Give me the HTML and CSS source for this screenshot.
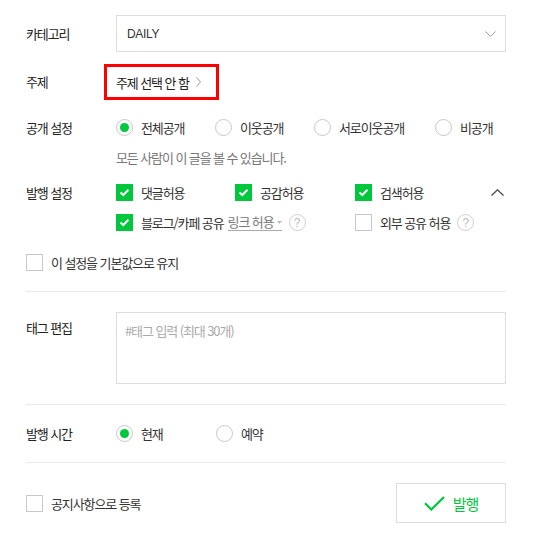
FILE: index.html
```html
<!DOCTYPE html>
<html lang="ko">
<head>
<meta charset="utf-8">
<link rel="stylesheet" href="styles.css">
</head>
<body>
<div class="panel">
  <div class="row row-cat">
    <div class="label">카테고리</div>
    <div class="select">
      <span class="select-text">DAILY</span>
      <svg class="chev-down" width="11" height="6" viewBox="0 0 11 6"><path d="M0.5 0.5 L5.5 5.5 L10.5 0.5" fill="none" stroke="#9a9a9a" stroke-width="1"/></svg>
    </div>
  </div>

  <div class="row row-subject">
    <div class="label">주제</div>
    <a class="subject">
      <span>주제 선택 안 함</span>
      <svg class="chev-right" width="5" height="10" viewBox="0 0 5 10"><path d="M0.5 0.5 L4.5 5 L0.5 9.5" fill="none" stroke="#999" stroke-width="1"/></svg>
    </a>
  </div>

  <div class="row row-open">
    <div class="label label-17">공개 설정</div>
    <div class="content">
      <div class="line">
        <div class="radio on w99"><i></i><span>전체공개</span></div>
        <div class="radio w99"><i></i><span>이웃공개</span></div>
        <div class="radio w121"><i></i><span>서로이웃공개</span></div>
        <div class="radio"><i></i><span>비공개</span></div>
      </div>
      <p class="help">모든 사람이 이 글을 볼 수 있습니다.</p>
    </div>
  </div>

  <div class="row row-publish">
    <div class="label label-17">발행 설정</div>
    <div class="content">
      <div class="line">
        <div class="check w119"><i class="cb on"><svg width="15" height="15" viewBox="0 0 15 15"><path d="M3.5 7.5 L6.3 10 L11.5 4.8" fill="none" stroke="#fff" stroke-width="2"/></svg></i><span>댓글허용</span></div>
        <div class="check w120"><i class="cb on"><svg width="15" height="15" viewBox="0 0 15 15"><path d="M3.5 7.5 L6.3 10 L11.5 4.8" fill="none" stroke="#fff" stroke-width="2"/></svg></i><span>공감허용</span></div>
        <div class="check"><i class="cb on"><svg width="15" height="15" viewBox="0 0 15 15"><path d="M3.5 7.5 L6.3 10 L11.5 4.8" fill="none" stroke="#fff" stroke-width="2"/></svg></i><span>검색허용</span></div>
        <svg class="chev-up" width="13" height="7" viewBox="0 0 13 7"><path d="M0.5 6.5 L6.5 0.8 L12.5 6.5" fill="none" stroke="#444" stroke-width="1.2"/></svg>
      </div>
      <div class="line line2">
        <div class="check w239"><i class="cb on"><svg width="15" height="15" viewBox="0 0 15 15"><path d="M3.5 7.5 L6.3 10 L11.5 4.8" fill="none" stroke="#fff" stroke-width="2"/></svg></i><span>블로그/카페 공유</span>
          <span class="link">링크 허용<svg class="tri" width="5" height="3" viewBox="0 0 5 3"><path d="M0 0 H5 L2.5 3 Z" fill="#bbb"/></svg></span>
          <span class="q">?</span>
        </div>
        <div class="check"><i class="cb"></i><span>외부 공유 허용</span><span class="q">?</span></div>
      </div>
    </div>
  </div>

  <div class="row row-keep">
    <div class="check"><i class="cb"></i><span>이 설정을 기본값으로 유지</span></div>
  </div>

  <div class="hr hr1"></div>

  <div class="row row-tag">
    <div class="label label-tag">태그 편집</div>
    <div class="tagbox">#태그 입력 (최대 30개)</div>
  </div>

  <div class="hr hr2"></div>

  <div class="row row-time">
    <div class="label label-17">발행 시간</div>
    <div class="line">
      <div class="radio on w100"><i></i><span>현재</span></div>
      <div class="radio"><i></i><span>예약</span></div>
    </div>
  </div>

  <div class="hr hr3"></div>

  <div class="row row-bottom">
    <div class="check"><i class="cb"></i><span>공지사항으로 등록</span></div>
    <button class="btn">
      <svg width="21" height="15" viewBox="0 0 21 15"><path d="M1 7.2 L7.3 13.5 L20 1" fill="none" stroke="#00c73c" stroke-width="2.2"/></svg>
      <span>발행</span>
    </button>
  </div>
</div>
</body>
</html>
```
FILE: styles.css
```css
* { box-sizing: border-box; margin: 0; padding: 0; }
body {
  font-family: "Noto Sans CJK KR", "Noto Sans", sans-serif;
  font-size: 13px;
  color: #333;
  background: #fff;
  letter-spacing: -1.1px;
}
.panel { width: 536px; padding: 15px 30px 0 26px; }
.row { display: flex; }
.label { width: 90px; flex: none; line-height: 18px; color: #222; }
.label-17 { line-height: 17px; }
.content { flex: 1; }
.line { display: flex; align-items: center; height: 17px; }

.row-cat { height: 37px; align-items: center; }
.select {
  flex: 1; height: 37px; border: 1px solid #ddd;
  display: flex; align-items: center; justify-content: space-between;
  padding: 0 9px 0 10px;
}
.select-text { font-family: "Liberation Sans", Arial, sans-serif; font-size: 12px; letter-spacing: -0.3px; color: #333; }

.row-subject { margin-top: 12px; height: 36px; align-items: center; }
.subject {
  margin-left: -12px; width: 115px; height: 36px;
  border: 3px solid #f00; display: flex; align-items: center;
  padding: 0 15px 0 9px; color: #222; white-space: nowrap;
}
.chev-right { margin-left: auto; flex: none; }

.row-open { margin-top: 19px; }
.radio { display: flex; align-items: center; height: 17px; white-space: nowrap; }
.radio i {
  width: 17px; height: 17px; border: 1px solid #c8c8c8; border-radius: 50%;
  margin-right: 8px; position: relative; flex: none;
}
.radio.on i::after {
  content: ""; position: absolute; left: 3px; top: 3px;
  width: 9px; height: 9px; border-radius: 50%; background: #00c73c;
}
.w99 { width: 99px; }
.w100 { width: 100px; }
.w121 { width: 121px; }
.w119 { width: 119px; }
.w120 { width: 120px; }
.w239 { width: 239px; }
.help { margin-top: 13px; line-height: 18px; color: #777; }

.row-publish { margin-top: 17px; }
.line2 { margin-top: 13px; }
.check { display: flex; align-items: center; height: 17px; white-space: nowrap; }
.cb {
  width: 17px; height: 17px; border: 1px solid #c8c8c8; background: #fff;
  margin-right: 8px; flex: none; display: flex; align-items: center; justify-content: center;
}
.cb.on { background: #00c73c; border-color: #00c73c; }
.chev-up { margin-left: auto; margin-right: 2px; }
.link {
  margin-left: 4px; color: #777; line-height: 16px;
  border-bottom: 1px solid #aaa; display: inline-flex; align-items: center;
}
.tri { margin-left: 3px; }
.q {
  margin-left: 7px; width: 17px; height: 17px; border: 1px solid #d0d0d0; border-radius: 50%;
  color: #bbb; font-family: "Liberation Sans", Arial, sans-serif; font-size: 12px; letter-spacing: 0;
  display: inline-flex; align-items: center; justify-content: center; flex: none;
}

.row-keep { margin-top: 23px; }

.hr { height: 1px; background: #ebebeb; }
.hr1 { margin-top: 20px; }
.row-tag { margin-top: 20px; }
.label-tag { padding-top: 7px; }
.tagbox {
  flex: 1; height: 72px; border: 1px solid #ddd;
  padding: 9px 8px; line-height: 18px; color: #aaa;
}
.hr2 { margin-top: 20px; }
.row-time { margin-top: 20px; align-items: center; }
.hr3 { margin-top: 20px; }

.row-bottom { margin-top: 20px; height: 40px; align-items: center; justify-content: space-between; }
.btn {
  width: 110px; height: 40px; border: 1px solid #ddd; background: #fff;
  display: flex; align-items: center; justify-content: center; gap: 8px;
  font-family: "Noto Sans CJK KR", "Noto Sans", sans-serif; font-size: 15px;
  letter-spacing: -1px; color: #00c73c; cursor: pointer;
}
```
